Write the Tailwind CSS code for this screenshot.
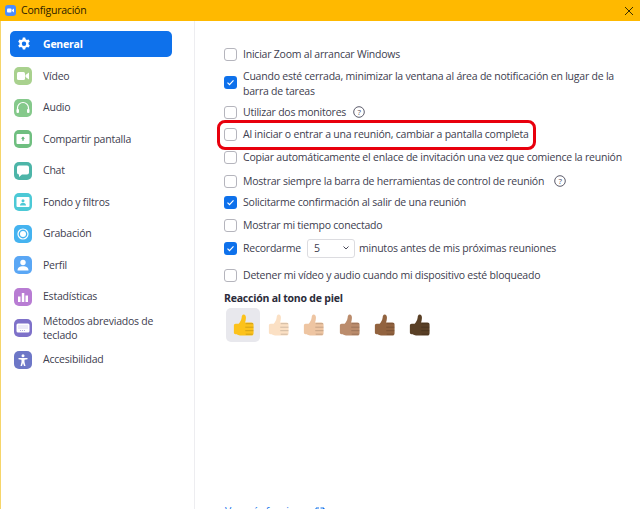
<!DOCTYPE html>
<html>
<head>
	<title>Configuración</title>
	<meta charset="UTF-8"/>
	<script src="https://cdn.jsdelivr.net/npm/@tailwindcss/browser@4"></script>
</head>
<body class="w-[640px] h-[509px] overflow-hidden bg-white font-['Open_Sans','Noto_Sans',sans-serif] text-[10.5px] leading-[15px] tracking-[-0.22px] text-[#40404f]">
	<svg class="hidden">
		<symbol id="thumb" viewBox="0 0 24 26">
			<path fill="currentColor" d="M1 13.500c0-1.200.8-2 2-2h3.500c1.600-2 3-4 3.400-7.200.2-1.600.6-3.300 2.300-3.300 1.800 0 2.600 1.800 2.600 3.800 0 2-.5 3.600-1 5.200h7.200c1.600 0 2.500 1 2.500 2.300v10c0 1.600-1 2.700-2.500 2.700H8c-1.600 0-2.600-.7-3.600-1.300H3c-1.200 0-2-.8-2-2z"/>
			<path fill="none" stroke="#000" stroke-opacity=".2" stroke-width="1" d="M14.500 11.500h8.500M14 15.500h9.500M14 19.500h9.500M14.500 23.500h8"/>
		</symbol>
	</svg>

	<!-- Barre de titre -->
	<div class="h-[21px] bg-[#ffb900] flex items-center pl-[5px] pr-[6px] text-[#2b2000]">
		<svg width="11" height="11" viewBox="0 0 11 11"><rect width="11" height="11" rx="3" fill="#4a8cff"/><rect x="2" y="3.500" width="4.500" height="4" rx="1" fill="#fff"/><path d="M7 5l2-1.500v4L7 6z" fill="#fff"/></svg>
		<span class="ml-[5px]">Configuración</span>
		<svg class="ml-auto" width="10" height="10" viewBox="0 0 10 10"><path d="M1 1l8 8M9 1l-8 8" stroke="#3a3000" stroke-width="1"/></svg>
	</div>

	<div class="flex h-[488px] border-l border-l-[#f6d56a]">
		<!-- Menu latéral -->
		<nav class="w-[194px] shrink-0 border-r border-[#ededf0] pl-[9px] pr-[22px] pt-[10px]">
			<div class="h-[26px] rounded-[5px] bg-[#0e71eb] flex items-center pl-[7px] gap-[11px] text-white font-bold">
				<svg width="14" height="14" viewBox="0 0 14 14"><path fill="#fff" fill-rule="evenodd" d="M5.800.5h2.400l.4 1.700 1.300.7 1.700-.5 1.200 2.100-1.300 1.200v1.500l1.300 1.200-1.200 2.100-1.700-.5-1.300.7-.4 1.700H5.800l-.4-1.700-1.300-.7-1.700.5L1.200 8.600l1.300-1.200V5.900L1.200 4.700l1.200-2.100 1.700.5 1.300-.7zM7 4.600a2.200 2.200 0 100 4.400 2.200 2.200 0 000-4.400z"/></svg>
				<span class="ml-[1px]">General</span>
			</div>
			<div class="flex flex-col mt-[3.500px]">
				<div class="h-[31.500px] flex items-center pl-[4px] gap-[11px]">
					<svg width="18" height="18" viewBox="0 0 18 18" class="shrink-0"><rect width="18" height="18" rx="5" fill="#a9d18e"/><rect x="3" y="5" width="8" height="8" rx="1.500" fill="#fff"/><path d="M11.500 8l3.500-2.500v7L11.500 10z" fill="#fff"/></svg>
					<span>Vídeo</span>
				</div>
				<div class="h-[31.500px] flex items-center pl-[4px] gap-[11px]">
					<svg width="18" height="18" viewBox="0 0 18 18" class="shrink-0"><rect width="18" height="18" rx="5" fill="#85c98b"/><path d="M3.500 12V9a5.500 5.500 0 0111 0v3" fill="none" stroke="#fff" stroke-width="1.200"/><rect x="2.500" y="10" width="2.500" height="4" rx="1" fill="#fff"/><rect x="13" y="10" width="2.500" height="4" rx="1" fill="#fff"/></svg>
					<span>Audio</span>
				</div>
				<div class="h-[31.500px] flex items-center pl-[4px] gap-[11px]">
					<svg width="18" height="18" viewBox="0 0 18 18" class="shrink-0"><rect width="18" height="18" rx="5" fill="#6fbf80"/><rect x="2.500" y="4" width="13" height="10" rx="1" fill="#fff"/><path d="M9 6.500l2 2.200H9.700v2H8.300v-2H7z" fill="#5cb274"/></svg>
					<span>Compartir pantalla</span>
				</div>
				<div class="h-[31.500px] flex items-center pl-[4px] gap-[11px]">
					<svg width="18" height="18" viewBox="0 0 18 18" class="shrink-0"><rect width="18" height="18" rx="5" fill="#4db5a8"/><path d="M5 3.500h8A2 2 0 0115 5.500v5a2 2 0 01-2 2H8l-3 2.500v-2.500a2 2 0 01-2-2v-5a2 2 0 012-2z" fill="#fff"/></svg>
					<span>Chat</span>
				</div>
				<div class="h-[31.500px] flex items-center pl-[4px] gap-[11px]">
					<svg width="18" height="18" viewBox="0 0 18 18" class="shrink-0"><rect width="18" height="18" rx="5" fill="#4cc9d6"/><rect x="2.500" y="4" width="13" height="10" rx="1" fill="#fff"/><circle cx="9" cy="7.700" r="1.500" fill="#4cc9d6"/><path d="M6 12.500c0-1.800 1.300-2.700 3-2.700s3 .9 3 2.700z" fill="#4cc9d6"/></svg>
					<span>Fondo y filtros</span>
				</div>
				<div class="h-[31.500px] flex items-center pl-[4px] gap-[11px]">
					<svg width="18" height="18" viewBox="0 0 18 18" class="shrink-0"><rect width="18" height="18" rx="5" fill="#45b3f0"/><circle cx="9" cy="9" r="5" fill="none" stroke="#fff" stroke-width="1.200"/><circle cx="9" cy="9" r="3" fill="#fff"/></svg>
					<span>Grabación</span>
				</div>
				<div class="h-[31.500px] flex items-center pl-[4px] gap-[11px]">
					<svg width="18" height="18" viewBox="0 0 18 18" class="shrink-0"><rect width="18" height="18" rx="5" fill="#5aa7f5"/><circle cx="9" cy="6.500" r="2.700" fill="#fff"/><path d="M3.500 14.500c0-3 2.400-4.300 5.500-4.300s5.500 1.300 5.500 4.300z" fill="#fff"/></svg>
					<span>Perfil</span>
				</div>
				<div class="h-[31.500px] flex items-center pl-[4px] gap-[11px]">
					<svg width="18" height="18" viewBox="0 0 18 18" class="shrink-0"><rect width="18" height="18" rx="5" fill="#b87cd3"/><rect x="4" y="8.500" width="2.500" height="5.500" fill="#fff"/><rect x="7.800" y="5" width="2.500" height="9" fill="#fff"/><rect x="11.500" y="7.500" width="2.500" height="6.500" fill="#fff"/></svg>
					<span>Estadísticas</span>
				</div>
				<div class="h-[31.500px] flex items-center pl-[4px] gap-[11px]">
					<svg width="18" height="18" viewBox="0 0 18 18" class="shrink-0"><rect width="18" height="18" rx="5" fill="#7e71c9"/><rect x="2.500" y="4.500" width="13" height="9" rx="1.500" fill="#fff"/><path d="M4.500 7h9M4.500 9h9M6 11.500h6" stroke="#b7afe3" stroke-width="1" stroke-dasharray="1 1"/></svg>
					<span class="leading-[14px] w-[125px]">Métodos abreviados de teclado</span>
				</div>
				<div class="h-[31.500px] flex items-center pl-[4px] gap-[11px]">
					<svg width="18" height="18" viewBox="0 0 18 18" class="shrink-0"><rect width="18" height="18" rx="5" fill="#6d77c7"/><circle cx="9" cy="4.700" r="1.500" fill="#fff"/><path d="M4.500 7h9v1.300l-3 .5V11l1 4H10L9 12l-1 3H6.500l1-4V8.800l-3-.5z" fill="#fff"/></svg>
					<span>Accesibilidad</span>
				</div>
			</div>
		</nav>

		<!-- Contenu -->
		<main class="relative flex-1 pl-[29px] pt-[25px]">
			<div class="h-[16px] flex items-center gap-[6px]">
				<span class="w-[13px] h-[13px] rounded-[3px] border border-[#b5b5bd] bg-white shrink-0"></span>
				<span>Iniciar Zoom al arrancar Windows</span>
			</div>
			<div class="mt-[7px] flex gap-[6px] w-[399px]">
				<span class="mt-[7px] w-[13px] h-[13px] rounded-[3px] bg-[#0e71eb] flex items-center justify-center shrink-0">
					<svg width="9" height="9" viewBox="0 0 9 9"><path d="M1.500 4.700l2 2 4-4.400" fill="none" stroke="#fff" stroke-width="1.200"/></svg>
				</span>
				<span>Cuando esté cerrada, minimizar la ventana al área de notificación en lugar de la barra de tareas</span>
			</div>
			<div class="mt-[5px] h-[16px] flex items-center gap-[6px]">
				<span class="w-[13px] h-[13px] rounded-[3px] border border-[#b5b5bd] bg-white shrink-0"></span>
				<span>Utilizar dos monitores</span>
				<svg class="ml-[1px]" width="12" height="12" viewBox="0 0 12 12"><circle cx="6" cy="6" r="5.300" fill="none" stroke="#4a4a5a" stroke-width=".9"/><text x="6" y="9" text-anchor="middle" font-size="8" font-family="Open Sans" fill="#4a4a5a">?</text></svg>
			</div>
			<div class="mt-[6px] h-[16px] flex items-center gap-[6px]">
				<span class="w-[13px] h-[13px] rounded-[3px] border border-[#b5b5bd] bg-white shrink-0"></span>
				<span>Al iniciar o entrar a una reunión, cambiar a pantalla completa</span>
			</div>
			<div class="mt-[7px] h-[16px] flex items-center gap-[6px]">
				<span class="w-[13px] h-[13px] rounded-[3px] border border-[#b5b5bd] bg-white shrink-0"></span>
				<span class="whitespace-nowrap">Copiar automáticamente el enlace de invitación una vez que comience la reunión</span>
			</div>
			<div class="mt-[8px] h-[16px] flex items-center gap-[6px]">
				<span class="w-[13px] h-[13px] rounded-[3px] border border-[#b5b5bd] bg-white shrink-0"></span>
				<span>Mostrar siempre la barra de herramientas de control de reunión</span>
				<svg class="ml-[4px]" width="12" height="12" viewBox="0 0 12 12"><circle cx="6" cy="6" r="5.300" fill="none" stroke="#4a4a5a" stroke-width=".9"/><text x="6" y="9" text-anchor="middle" font-size="8" font-family="Open Sans" fill="#4a4a5a">?</text></svg>
			</div>
			<div class="mt-[5px] h-[16px] flex items-center gap-[6px]">
				<span class="w-[13px] h-[13px] rounded-[3px] bg-[#0e71eb] flex items-center justify-center shrink-0">
					<svg width="9" height="9" viewBox="0 0 9 9"><path d="M1.500 4.700l2 2 4-4.400" fill="none" stroke="#fff" stroke-width="1.200"/></svg>
				</span>
				<span>Solicitarme confirmación al salir de una reunión</span>
			</div>
			<div class="mt-[7px] h-[16px] flex items-center gap-[6px]">
				<span class="w-[13px] h-[13px] rounded-[3px] border border-[#b5b5bd] bg-white shrink-0"></span>
				<span>Mostrar mi tiempo conectado</span>
			</div>
			<div class="mt-[7px] h-[16px] flex items-center gap-[6px]">
				<span class="w-[13px] h-[13px] rounded-[3px] bg-[#0e71eb] flex items-center justify-center shrink-0">
					<svg width="9" height="9" viewBox="0 0 9 9"><path d="M1.500 4.700l2 2 4-4.400" fill="none" stroke="#fff" stroke-width="1.200"/></svg>
				</span>
				<span class="w-[58px]">Recordarme</span>
				<span class="w-[48px] h-[19px] rounded-[3px] border border-[#dcdce0] flex items-center justify-between pl-[6px] pr-[4px]">
					5
					<svg width="8" height="6" viewBox="0 0 8 6"><path d="M1.500 1.500L4 4l2.500-2.500" fill="none" stroke="#4a4a5a" stroke-width="1"/></svg>
				</span>
				<span class="-ml-[2px]">minutos antes de mis próximas reuniones</span>
			</div>
			<div class="mt-[11px] h-[16px] flex items-center gap-[6px]">
				<span class="w-[13px] h-[13px] rounded-[3px] border border-[#b5b5bd] bg-white shrink-0"></span>
				<span>Detener mi vídeo y audio cuando mi dispositivo esté bloqueado</span>
			</div>
			<h2 class="mt-[8px] font-bold text-[#2b2b3a]">Reacción al tono de piel</h2>
			<div class="mt-[2px] ml-[2px] flex gap-[1.400px]">
				<div class="w-[34px] h-[34px] rounded-[5px] bg-[#e8e8ed] flex items-center justify-center text-[#fcc21b]"><svg width="21" height="24"><use href="#thumb"/></svg></div>
				<div class="w-[34px] h-[34px] flex items-center justify-center text-[#fbe0c4]"><svg width="21" height="24"><use href="#thumb"/></svg></div>
				<div class="w-[34px] h-[34px] flex items-center justify-center text-[#eec5a2]"><svg width="21" height="24"><use href="#thumb"/></svg></div>
				<div class="w-[34px] h-[34px] flex items-center justify-center text-[#bb8c6c]"><svg width="21" height="24"><use href="#thumb"/></svg></div>
				<div class="w-[34px] h-[34px] flex items-center justify-center text-[#92633f]"><svg width="21" height="24"><use href="#thumb"/></svg></div>
				<div class="w-[34px] h-[34px] flex items-center justify-center text-[#5a4026]"><svg width="21" height="24"><use href="#thumb"/></svg></div>
			</div>

			<!-- Encadré rouge de la capture -->
			<div class="absolute left-[22px] top-[99px] w-[319px] h-[30px] rounded-[8px] border-[3px] border-[#e8000d]"></div>

			<a class="absolute left-[30px] top-[483px] flex items-center gap-[4px] text-[#0e71eb]">Ver más funciones
				<svg width="10" height="10" viewBox="0 0 10 10"><path d="M4 1H1v8h8V6M5.500 1H9v3.500M9 1L4.500 5.500" fill="none" stroke="#0e71eb" stroke-width="1"/></svg>
			</a>
		</main>
	</div>
</body>
</html>
